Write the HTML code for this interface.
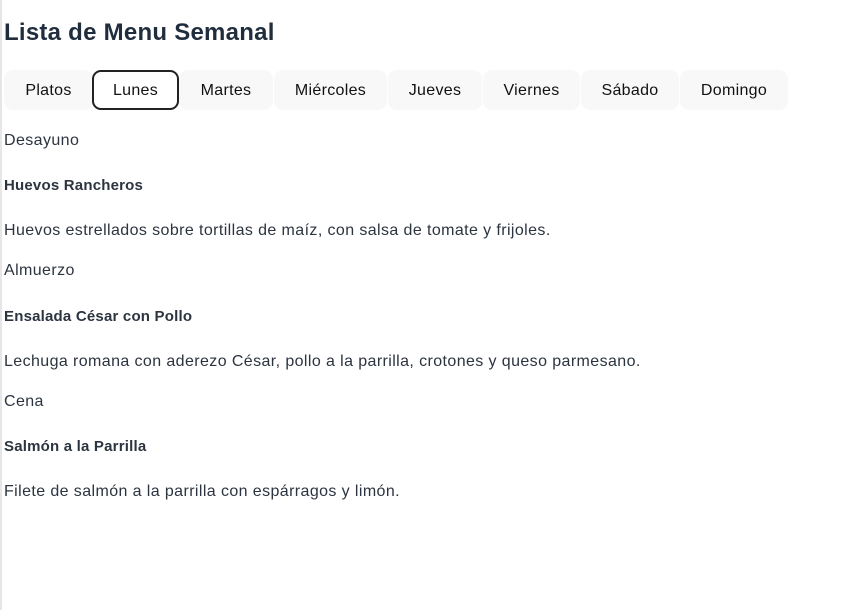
<!DOCTYPE html>
<html><head><meta charset="utf-8"><style>
body{margin:0;width:847px;height:610px;background:#fff;font-family:"Liberation Sans",sans-serif;position:relative;overflow:hidden}
.bar{position:absolute;left:0;top:0;width:2px;height:610px;background:#e6e6e6}
h1{position:absolute;left:4px;top:17px;margin:0;font-size:24px;font-weight:bold;color:#1f2d3d;line-height:32px;letter-spacing:0.25px}
.tab{position:absolute;top:70px;height:40px;line-height:41px;text-align:center;background:#f8f8f8;border-radius:9px;font-size:16px;color:#111;box-sizing:border-box;letter-spacing:0.3px}
.tab.act{background:#fff;border:2px solid #222;line-height:37px}
.t{position:absolute;left:4px;font-size:16px;color:#2c3440;line-height:20px;margin:0;letter-spacing:0.4px}
.b{font-weight:bold;font-size:15px;letter-spacing:0.2px}
</style></head><body>
<div class="bar"></div>
<h1>Lista de Menu Semanal</h1>
<div class="tab" style="left:4px;width:89px">Platos</div>
<div class="tab act" style="left:92px;width:87px">Lunes</div>
<div class="tab" style="left:179px;width:94px">Martes</div>
<div class="tab" style="left:274px;width:113px">Miércoles</div>
<div class="tab" style="left:388px;width:94px">Jueves</div>
<div class="tab" style="left:483px;width:97px">Viernes</div>
<div class="tab" style="left:581px;width:98px">Sábado</div>
<div class="tab" style="left:680px;width:108px">Domingo</div>
<p class="t" style="top:131px">Desayuno</p>
<p class="t b" style="top:176px">Huevos Rancheros</p>
<p class="t" style="top:221px">Huevos estrellados sobre tortillas de maíz, con salsa de tomate y frijoles.</p>
<p class="t" style="top:261px">Almuerzo</p>
<p class="t b" style="top:307px">Ensalada César con Pollo</p>
<p class="t" style="top:352px">Lechuga romana con aderezo César, pollo a la parrilla, crotones y queso parmesano.</p>
<p class="t" style="top:392px">Cena</p>
<p class="t b" style="top:437px">Salmón a la Parrilla</p>
<p class="t" style="top:482px">Filete de salmón a la parrilla con espárragos y limón.</p>
</body></html>
